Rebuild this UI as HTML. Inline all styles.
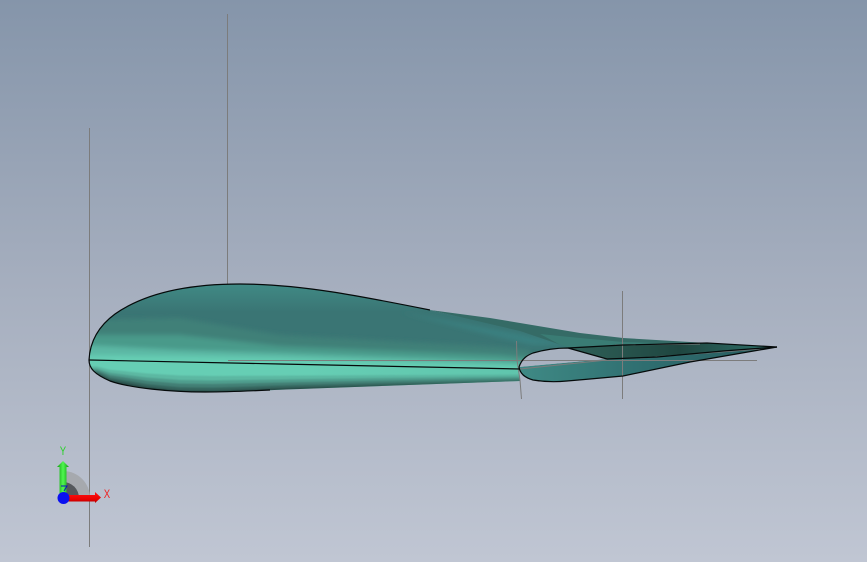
<!DOCTYPE html>
<html>
<head>
<meta charset="utf-8">
<style>
html,body{margin:0;padding:0;width:867px;height:562px;overflow:hidden}
body{background:linear-gradient(180deg,#8595aa 0%,#a5aebe 50%,#c0c6d3 100%)}
svg{display:block;position:absolute;left:0;top:0}
text{font-family:"Liberation Sans",sans-serif}
</style>
</head>
<body>
<svg width="867" height="562" viewBox="0 0 867 562" xmlns="http://www.w3.org/2000/svg">
<defs>
<linearGradient id="base" x1="0" y1="284" x2="0" y2="312" gradientUnits="userSpaceOnUse">
<stop offset="0" stop-color="#408a85"/>
<stop offset="1" stop-color="#3a7574"/>
</linearGradient>
<linearGradient id="dark" x1="570" y1="0" x2="770" y2="0" gradientUnits="userSpaceOnUse">
<stop offset="0" stop-color="#2f6058"/>
<stop offset=".55" stop-color="#1f4640"/>
<stop offset="1" stop-color="#2f6f68"/>
</linearGradient>
<linearGradient id="lf" x1="520" y1="0" x2="770" y2="0" gradientUnits="userSpaceOnUse">
<stop offset="0" stop-color="#3f8a85"/>
<stop offset=".5" stop-color="#2f6e70"/>
<stop offset="1" stop-color="#285c5e"/>
</linearGradient>
<linearGradient id="fade" x1="300" y1="0" x2="520" y2="0" gradientUnits="userSpaceOnUse">
<stop offset="0" stop-color="#52b09c" stop-opacity="0"/>
<stop offset="1" stop-color="#52b09c" stop-opacity=".3"/>
</linearGradient>
<linearGradient id="g" x1="0" x2="1" y1="0" y2="0"><stop offset="0" stop-color="#0f9a0f"/><stop offset=".5" stop-color="#50f850"/><stop offset="1" stop-color="#0f9a0f"/></linearGradient>
<linearGradient id="r" x1="0" x2="0" y1="0" y2="1"><stop offset="0" stop-color="#ff1414"/><stop offset=".7" stop-color="#e80000"/><stop offset="1" stop-color="#a00000"/></linearGradient>
<clipPath id="upclip"><path d="M89,360 C90,340 100,325 115,314 C135,300 170,284 240,284 C300,284 360,296 430,310 L520,331 573,349 545,350 533,353 519,367 520,369.5 280,364.5 Z"/></clipPath>
<clipPath id="lowclip"><path d="M89,360 C89,368 94,374 110,381 C130,388 170,392 205,392 C240,392 270,390 300,389 L520,381 519,367 520,369 280,364 Z"/></clipPath>
<filter id="b" x="-10%" y="-50%" width="120%" height="200%"><feGaussianBlur stdDeviation="2.5"/></filter>
<filter id="b2" x="-5%" y="-30%" width="110%" height="160%"><feGaussianBlur stdDeviation=".8"/></filter>
</defs>

<!-- back surface band -->
<path d="M430,310 L490,318 580,333 623,338 690,342 777,347 700,345 623,346 568,349 520,332 Z" fill="#356b66"/>
<path d="M540,334 L580,338 623,342 690,344 623,346 568,349 Z" fill="#3a7c74"/>

<!-- upper body -->
<path d="M89,360 C90,340 100,325 115,314 C135,300 170,284 240,284 C300,284 360,296 430,310 L520,331 573,349 545,350 533,353 519,367 520,369.5 280,364.5 Z" fill="url(#base)"/>
<g clip-path="url(#upclip)">
<path d="M400,312 L520,334 570,345 530,345 Z" fill="#3b8080" filter="url(#b)"/>
<g filter="url(#b)">
<path d="M85,320 L180,318 280,335 500,347 530,350 530,375 85,375 Z" fill="#3f8078"/>
<path d="M85,335 L180,335 280,346 500,355 530,358 530,375 85,375 Z" fill="#4a9a8a"/>
<path d="M85,345 L180,350 280,353 500,361 530,363 530,375 85,375 Z" fill="#5bb8a4"/>
<path d="M85,355 L180,356 280,358 530,366 530,375 85,375 Z" fill="#66ceb4"/>
</g>
</g>

<!-- lower body -->
<g clip-path="url(#lowclip)">
<rect x="85" y="355" width="440" height="40" fill="#66ceb4"/>
<g filter="url(#b2)">
<path d="M85,366 L97,366.5 110,369.7 147,373.5 180,375.5 213,376 270,375.7 380,375.1 525,374.4 V396 H85 Z" fill="#5cb8a2"/>
<path d="M85,368 L97,368.6 110,372.8 147,377.5 180,380 213,380.5 270,379.6 380,378 525,376.2 V396 H85 Z" fill="#4f9d8d"/>
<path d="M85,370 L97,370.3 110,375.3 147,380.7 180,383.6 213,384 270,382.7 380,380.5 525,377.6 V396 H85 Z" fill="#437f75"/>
<path d="M85,372 L97,372 110,377.7 147,384 180,387.2 213,387.6 270,385.8 380,382.8 525,379 V396 H85 Z" fill="#36665f"/>
<path d="M85,373 L97,373.4 110,379.8 147,386.7 180,390.2 213,390.6 270,388.4 380,384.8 525,380.3 V396 H85 Z" fill="#2a4d49"/>
</g>
<rect x="250" y="360" width="275" height="35" fill="url(#fade)"/>
</g>

<!-- rear facets -->
<path d="M519,367 L607,359 657,357 723,351 777,347 690,362 623,376 590,379 557,382 533,380 523,376 Z" fill="url(#lf)"/>
<path d="M568,348 L623,345 707,343 777,347 723,351 657,357 607,359 Z" fill="url(#dark)"/>
<!-- hole -->
<path d="M519,367 C522,358 528,355 533,353 C545,349.5 556,348 568,348 L607,359 Z" fill="#a9b2c1"/>

<!-- grey construction lines -->
<g stroke="#7c7c7c" stroke-width="1" fill="none">
<path d="M89.5,128 V547"/>
<path d="M227.5,14 V284"/>
<path d="M622.5,291 V399"/>
<path d="M228,360.5 H757"/>
<path d="M516.5,341 L517,360 520,380 521.5,399"/>
<path d="M520,369 L607,360"/>
<path d="M640,358 L760,349"/>
<path d="M615,345 L700,344"/>
</g>

<!-- black edges -->
<g stroke="#050a0a" stroke-width="1.2" fill="none" stroke-linejoin="round">
<path d="M89,360 C90,340 100,325 115,314 C135,300 170,284 240,284 C300,284 360,296 430,310"/>
<path d="M89,360 C89,368 94,374 110,381 C130,388 170,392 205,392 C225,392 250,391 270,390"/>
<path d="M89,360 L280,364 520,369"/>
<path d="M519,367 C522,358 528,355 533,353 C545,349.5 556,348 568,348 L607,359 L657,357 723,351 777,347"/>
<path d="M519,367 C520,374 526,378 533,380 C545,382 557,382 567,381 L590,379 623,376 690,362 777,347"/>
<path d="M568,348 L623,345 707,343 777,347"/>
</g>

<!-- triad -->
<path d="M63,498 L90,498 A27,27 0 0 0 63,471 Z" fill="#a6a9ae"/>
<path d="M63,498 L79,498 A16,16 0 0 0 63,482 Z" fill="#55585c"/>
<path d="M59.5,498 V467 H57 L63,461 69,467 H66.5 V498 Z" fill="url(#g)"/>
<path d="M63,495 H95 V492 L101,497.5 95,503 V501.5 H63 Z" fill="url(#r)"/>
<path d="M61,486 H67 L64,491" stroke="#1010c0" stroke-width="1" fill="none"/>
<circle cx="63.5" cy="498" r="6" fill="#0a10f0"/>
<text transform="translate(63,455) scale(.8,1)" font-size="12" fill="#2cd02c" text-anchor="middle">Y</text>
<text transform="translate(107,498) scale(.8,1)" font-size="12" fill="#f02020" text-anchor="middle">X</text>
</svg>
</body>
</html>
